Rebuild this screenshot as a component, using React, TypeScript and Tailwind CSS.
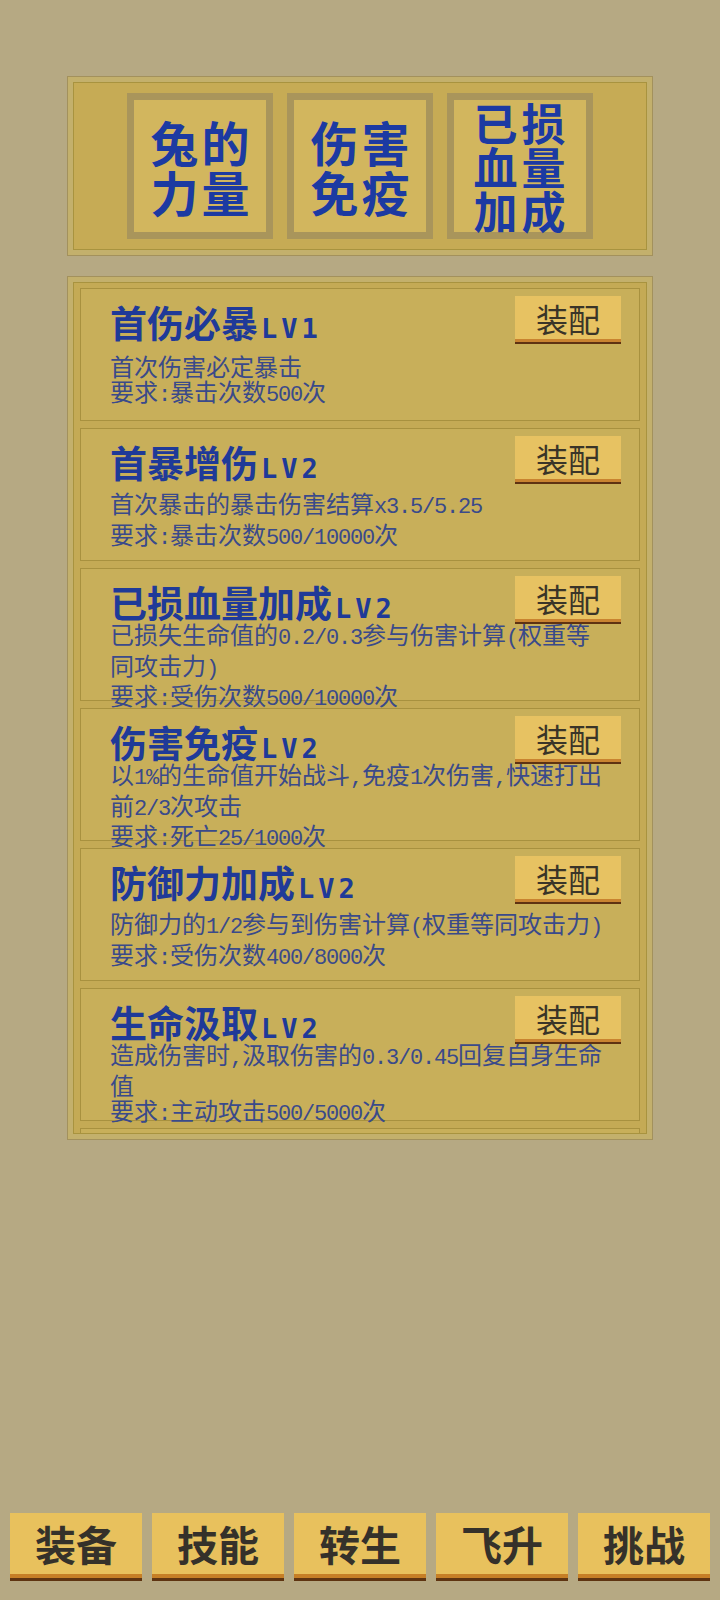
import type { ReactNode } from "react";

type Skill = {
    name: string;
    lv: string;
    lines: string[];
};

const skills: Skill[] = [
    { name: "首伤必暴", lv: "LV1", lines: ["首次伤害必定暴击", "要求:暴击次数500次"] },
    { name: "首暴增伤", lv: "LV2", lines: ["首次暴击的暴击伤害结算x3.5/5.25", "要求:暴击次数500/10000次"] },
    {
        name: "已损血量加成",
        lv: "LV2",
        lines: ["已损失生命值的0.2/0.3参与伤害计算(权重等", "同攻击力)", "要求:受伤次数500/10000次"],
    },
    {
        name: "伤害免疫",
        lv: "LV2",
        lines: ["以1%的生命值开始战斗,免疫1次伤害,快速打出", "前2/3次攻击", "要求:死亡25/1000次"],
    },
    { name: "防御力加成", lv: "LV2", lines: ["防御力的1/2参与到伤害计算(权重等同攻击力)", "要求:受伤次数400/8000次"] },
    {
        name: "生命汲取",
        lv: "LV2",
        lines: ["造成伤害时,汲取伤害的0.3/0.45回复自身生命", "值", "要求:主动攻击500/5000次"],
    },
];

const tiles = [
    { lines: ["兔的", "力量"], size: "text-[48px] leading-[50px] tracking-[3px]" },
    { lines: ["伤害", "免疫"], size: "text-[48px] leading-[50px] tracking-[3px]" },
    { lines: ["已损", "血量", "加成"], size: "text-[44px] leading-[44px] tracking-[4px]" },
];

const navItems = ["装备", "技能", "转生", "飞升", "挑战"];

// latin runs get the narrow mono face, like the pixel font in the game
function Mixed({ text, latin }: { text: string; latin: string }) {
    const parts = text.split(/([\x20-\x7E]+)/);
    const out: ReactNode[] = parts.map((p, i) =>
        /^[\x20-\x7E]+$/.test(p) ? (
            <span key={i} className={latin}>
                {p}
            </span>
        ) : (
            p
        )
    );
    return <>{out}</>;
}

function SkillCard({ skill }: { skill: Skill }) {
    return (
        <div className="relative flex h-[133px] shrink-0 flex-col border border-[#a8913f] bg-[#c8af5a] pl-[29px]">
            <div className="h-[52px] shrink-0 pt-[15px]">
                <div className="flex items-baseline whitespace-nowrap leading-[37px] text-[#1f3a98]">
                    <span className="font-['Noto_Sans_CJK_SC'] text-[37px] font-bold">{skill.name}</span>
                    <span className="ml-[3px] font-['DejaVu_Sans_Mono'] text-[27px] font-bold tracking-[4px]">
                        {skill.lv}
                    </span>
                </div>
            </div>
            <div className="flex flex-1 flex-col justify-center">
                {skill.lines.map((line, i) => (
                    <div
                        key={i}
                        className="whitespace-nowrap font-['Noto_Sans_CJK_SC'] text-[24px] leading-[25.5px] text-[#3a4a8a]"
                    >
                        <Mixed text={line} latin="font-['Liberation_Mono'] text-[22px] tracking-[-1.2px]" />
                    </div>
                ))}
            </div>
            <button className="absolute right-[18px] top-[7px] flex h-[48px] w-[106px] items-center justify-center border-b-2 border-[#5e3212] bg-[#e7c262] pb-[3px] font-['Noto_Sans_CJK_SC'] text-[32px] leading-none text-[#3a3428] shadow-[inset_0_-3px_0_#c98330]">
                装配
            </button>
        </div>
    );
}

export default function App() {
    return (
        <div className="flex min-h-[1600px] flex-col bg-[#b6a983] pt-[76px] font-['Noto_Sans_CJK_SC',sans-serif]">
            {/* talent tiles */}
            <div className="mx-auto w-[586px] border border-[#a3915c] bg-[#c3b06c] p-[5px]">
                <div className="flex justify-center gap-[14px] border border-[#a8933f] bg-[#c6ab55] py-[10px]">
                    {tiles.map((t, i) => (
                        <div
                            key={i}
                            className="flex h-[146px] w-[146px] flex-col items-center justify-center border-[7px] border-[#a9955b] bg-[#d2b65e]"
                        >
                            {t.lines.map((l) => (
                                <div key={l} className={"pl-[3px] font-bold text-[#1c3aa2] " + t.size}>
                                    {l}
                                </div>
                            ))}
                        </div>
                    ))}
                </div>
            </div>

            {/* skill list */}
            <div className="mx-auto mt-[20px] w-[586px] border border-[#a3915c] bg-[#c3b06c] p-[5px]">
                <div className="flex h-[852px] flex-col gap-[7px] overflow-hidden border border-[#a8933f] bg-[#c4aa55] px-[6px] pt-[5px]">
                    {skills.map((s) => (
                        <SkillCard key={s.name} skill={s} />
                    ))}
                    {/* next card, scrolled out of view */}
                    <div className="h-[133px] shrink-0 border border-[#a8913f] bg-[#c8af5a]" />
                </div>
            </div>

            {/* bottom nav */}
            <div className="mt-auto grid grid-cols-5 gap-[10px] px-[10px] pb-[19px]">
                {navItems.map((n) => (
                    <button
                        key={n}
                        className="flex h-[68px] items-center justify-center border-b-[3px] border-[#5e3411] bg-[#e8c15d] pb-[5px] text-[41px] font-bold leading-none text-[#35312a] shadow-[inset_0_-4px_0_#c67f26]"
                    >
                        {n}
                    </button>
                ))}
            </div>
        </div>
    );
}
